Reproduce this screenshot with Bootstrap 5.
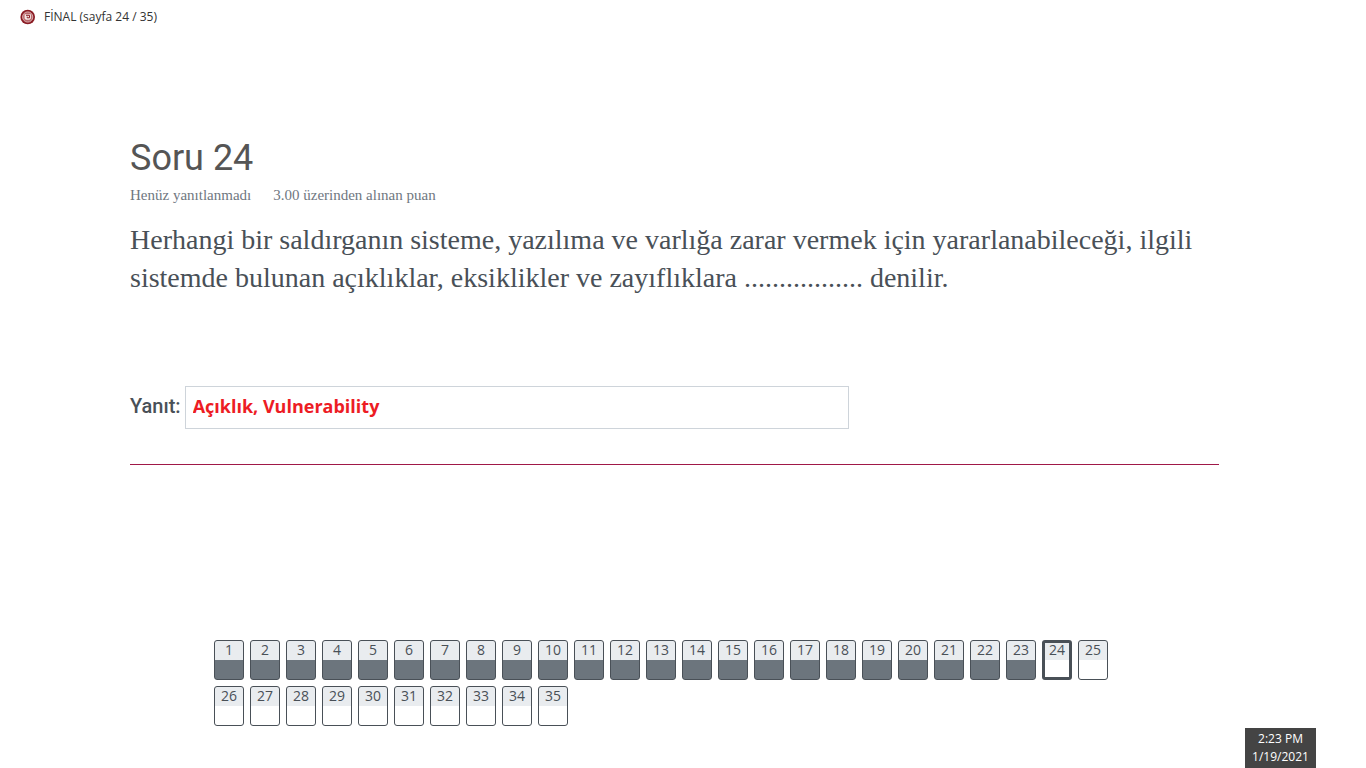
<!DOCTYPE html>
<html lang="tr">
<head>
<meta charset="utf-8">
<meta name="viewport" content="width=device-width, initial-scale=1">
<title>FİNAL (sayfa 24 / 35)</title>
<link href="https://cdn.jsdelivr.net/npm/bootstrap@5.3.0/dist/css/bootstrap.min.css" rel="stylesheet">
<style>
body { font-family: "Open Sans", "Noto Sans", sans-serif; color: #495057; background: #fff; }
.page-top { padding: 8px 20px; font-size: 12px; line-height: 18px; color: #333; }
.page-top svg { width: 16px; height: 16px; }
.quiz { padding: 102px 147px 0 130px; }
.quiz-title { font-family: Roboto, sans-serif; font-size: 36px; line-height: 44px; font-weight: 400; color: #555; }
.quiz-info { font-family: Georgia, "Liberation Serif", serif; font-size: 15px; line-height: 20px; color: #6f777f; gap: 22px; margin-top: 5px; }
.quiz-text { font-family: Georgia, "Liberation Serif", serif; font-size: 28px; line-height: 38px; margin-top: 16px; }
.answer-row { margin-top: 89px; gap: 4px; }
.answer-row label { font-family: Roboto, sans-serif; font-size: 20px; font-weight: 500; line-height: 24px; padding-bottom: 4px; }
.answer-row .form-control { width: 61%; height: 43px; padding: 4px 7px 8px; font-size: 18px; font-weight: 700; color: #ed1c24; border-color: #ced4da; }
.quiz-line { margin: 35px 0 0; border-top: 1px solid #a01848; opacity: 1; }
.page-links { padding: 175px 250px 0 214px; gap: 6px; }
.page-link-box { width: 30px; height: 40px; border: 1px solid #495057; border-radius: 3px; font-size: 14px; line-height: 18px; color: #495057; background: linear-gradient(#e9ecef 19px, #fff 19px); }
.page-link-box.done { background: linear-gradient(#e9ecef 19px, #6c757d 19px); }
.page-link-box.current { border-width: 3px; line-height: 14px; background: linear-gradient(#e9ecef 17px, #fff 17px); }
.clock { right: 50px; width: 71px; height: 40px; padding-top: 2px; background: #444; color: #fff; font-size: 12px; line-height: 18px; }
</style>
</head>
<body>
<header class="page-top d-flex align-items-center gap-2">
<svg viewBox="0 0 16 16" aria-hidden="true"><circle cx="7.7" cy="8" r="7.3" fill="#8b1c24"/><circle cx="7.7" cy="8" r="5.1" fill="#b9686b" stroke="#d9aeb0" stroke-width="1"/><path d="M4.6 5.2h6.3v4.2l-1.6 1.4H6L4.6 9.4z" fill="#f4e7e5"/><path d="M6 6.3h3.5v2.5H7.2V7.6" fill="none" stroke="#8b1c24"/></svg>
<span>FİNAL (sayfa 24 / 35)</span>
</header>
<main>
<form class="quiz">
<h1 class="quiz-title mb-0">Soru 24</h1>
<div class="quiz-info d-flex"><span>Henüz yanıtlanmadı</span><span>3.00 üzerinden alınan puan</span></div>
<p class="quiz-text mb-0">Herhangi bir saldırganın sisteme, yazılıma ve varlığa zarar vermek için yararlanabileceği, ilgili sistemde bulunan açıklıklar, eksiklikler ve zayıflıklara ................. denilir.</p>
<div class="answer-row d-flex align-items-center"><label for="answer">Yanıt:</label><input id="answer" class="form-control rounded-0" type="text" value="Açıklık, Vulnerability"></div>
<hr class="quiz-line">
</form>
<nav class="page-links d-flex flex-wrap" aria-label="Sorular">
<a class="page-link-box done text-center text-decoration-none" href="#">1</a>
<a class="page-link-box done text-center text-decoration-none" href="#">2</a>
<a class="page-link-box done text-center text-decoration-none" href="#">3</a>
<a class="page-link-box done text-center text-decoration-none" href="#">4</a>
<a class="page-link-box done text-center text-decoration-none" href="#">5</a>
<a class="page-link-box done text-center text-decoration-none" href="#">6</a>
<a class="page-link-box done text-center text-decoration-none" href="#">7</a>
<a class="page-link-box done text-center text-decoration-none" href="#">8</a>
<a class="page-link-box done text-center text-decoration-none" href="#">9</a>
<a class="page-link-box done text-center text-decoration-none" href="#">10</a>
<a class="page-link-box done text-center text-decoration-none" href="#">11</a>
<a class="page-link-box done text-center text-decoration-none" href="#">12</a>
<a class="page-link-box done text-center text-decoration-none" href="#">13</a>
<a class="page-link-box done text-center text-decoration-none" href="#">14</a>
<a class="page-link-box done text-center text-decoration-none" href="#">15</a>
<a class="page-link-box done text-center text-decoration-none" href="#">16</a>
<a class="page-link-box done text-center text-decoration-none" href="#">17</a>
<a class="page-link-box done text-center text-decoration-none" href="#">18</a>
<a class="page-link-box done text-center text-decoration-none" href="#">19</a>
<a class="page-link-box done text-center text-decoration-none" href="#">20</a>
<a class="page-link-box done text-center text-decoration-none" href="#">21</a>
<a class="page-link-box done text-center text-decoration-none" href="#">22</a>
<a class="page-link-box done text-center text-decoration-none" href="#">23</a>
<a class="page-link-box current text-center text-decoration-none" href="#" aria-current="page">24</a>
<a class="page-link-box text-center text-decoration-none" href="#">25</a>
<a class="page-link-box text-center text-decoration-none" href="#">26</a>
<a class="page-link-box text-center text-decoration-none" href="#">27</a>
<a class="page-link-box text-center text-decoration-none" href="#">28</a>
<a class="page-link-box text-center text-decoration-none" href="#">29</a>
<a class="page-link-box text-center text-decoration-none" href="#">30</a>
<a class="page-link-box text-center text-decoration-none" href="#">31</a>
<a class="page-link-box text-center text-decoration-none" href="#">32</a>
<a class="page-link-box text-center text-decoration-none" href="#">33</a>
<a class="page-link-box text-center text-decoration-none" href="#">34</a>
<a class="page-link-box text-center text-decoration-none" href="#">35</a>
</nav>
</main>
<div class="clock position-fixed bottom-0 text-center"><div>2:23 PM</div><div>1/19/2021</div></div>
<script src="https://cdn.jsdelivr.net/npm/bootstrap@5.3.0/dist/js/bootstrap.bundle.min.js"></script>
</body>
</html>
